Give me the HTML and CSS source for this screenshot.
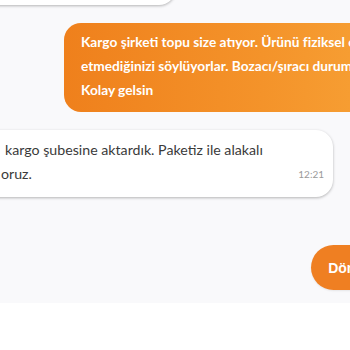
FILE: index.html
```html
<!DOCTYPE html>
<html lang="tr">
<head>
<meta charset="utf-8">
<link rel="stylesheet" href="styles.css">
</head>
<body>
<div class="chat">
  <div class="bubble in top-bubble"></div>
  <div class="bubble out">
    <div class="line">Kargo şirketi topu size atıyor. Ürünü fiziksel olarak teslim</div>
    <div class="line">etmediğinizi söylüyorlar. Bozacı/şıracı durumu</div>
    <div class="line">Kolay gelsin</div>
  </div>
  <div class="bubble in msg">
    <div class="line first">kargo şubesine aktardık. Paketiz ile alakalı</div>
    <div class="line last"><span class="txt">oruz.</span><span class="time">12:21</span></div>
  </div>
  <div class="actions">
    <button class="pill">Dönüş Talebi</button>
  </div>
</div>
<div class="footer"></div>
</body>
</html>
```
FILE: styles.css
```css
html, body {
  margin: 0;
  padding: 0;
  background: #ffffff;
  overflow: hidden;
  width: 350px;
  height: 350px;
}
.chat {
  height: 303px;
  background: #f9f9fb;
  display: flex;
  flex-direction: column;
  overflow: hidden;
  font-family: Lato, "Noto Sans", sans-serif;
}
.bubble {
  border-radius: 17px;
  box-sizing: border-box;
  flex-shrink: 0;
}
.in {
  background: #ffffff;
  box-shadow: 0 1px 3px rgba(0, 0, 0, 0.28);
  align-self: flex-start;
}
.top-bubble {
  margin-top: -40px;
  margin-left: -30px;
  width: 206px;
  height: 45px;
}
.out {
  margin-top: 18px;
  margin-left: 64px;
  width: 330px;
  padding: 7px 0 10px 17px;
  background: linear-gradient(90deg, #ef801c 0%, #f4932a 60%, #f7a236 100%);
  color: #ffffff;
  font-weight: 700;
  font-size: 13.7px;
  line-height: 24px;
  white-space: nowrap;
  align-self: flex-start;
}
.msg {
  margin-top: 18px;
  margin-left: -30px;
  width: 363px;
  padding: 8px 9px 11px 0;
  color: #3a3a3a;
  font-size: 14.2px;
  line-height: 24px;
  white-space: nowrap;
}
.msg .first {
  padding-left: 35px;
}
.msg .last {
  display: flex;
  justify-content: space-between;
  align-items: center;
  padding-left: 31px;
}
.time {
  font-size: 10px;
  color: #9a9a9a;
}
.actions {
  display: flex;
  justify-content: flex-end;
  margin-top: 48px;
  margin-right: -85px;
}
.pill {
  height: 45px;
  border: none;
  border-radius: 23px;
  background: #ef7f22;
  color: #ffffff;
  font-family: "Liberation Sans", Arial, sans-serif;
  font-weight: 700;
  font-size: 14px;
  padding: 0 20px 0 17px;
  white-space: nowrap;
  box-shadow: 0 1px 2px rgba(0, 0, 0, 0.08);
}
.footer {
  height: 47px;
  background: #ffffff;
}
```
